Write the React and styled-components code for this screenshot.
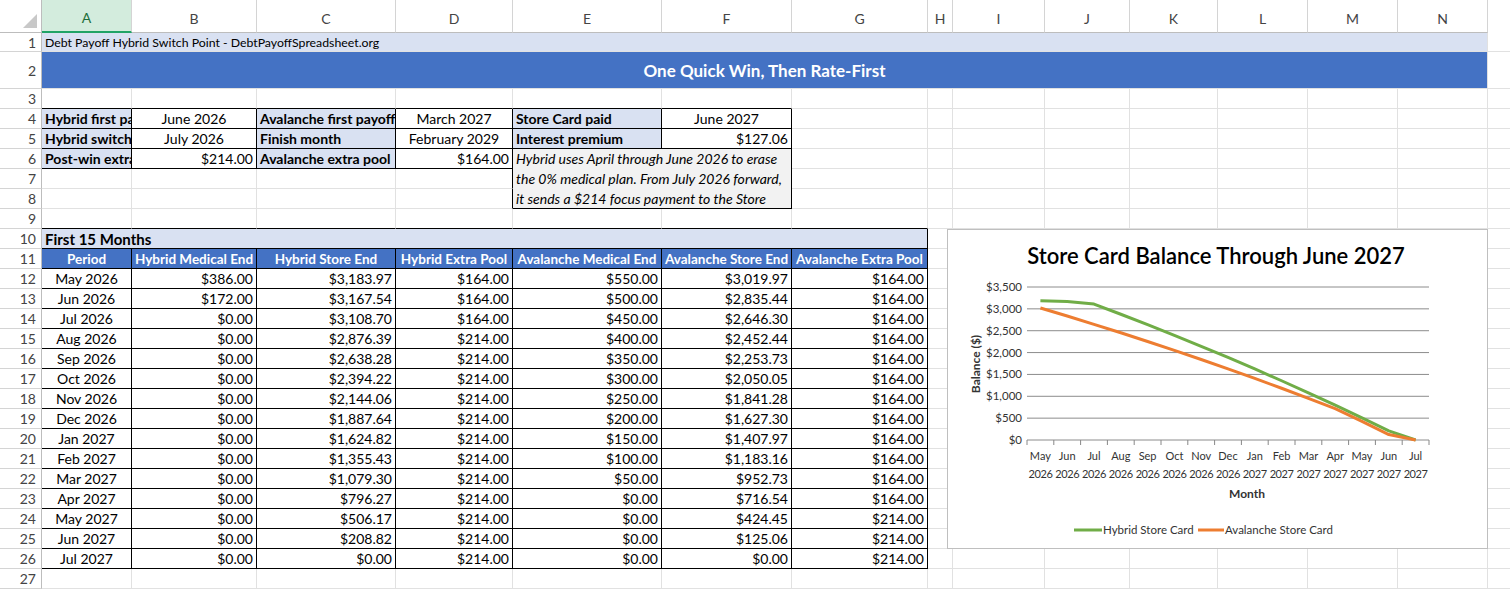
import React from "react";
import styled, { createGlobalStyle, css } from "styled-components";

const Global = createGlobalStyle`
  html, body { margin: 0; padding: 0; background: #fff; overflow: hidden; }
  body { font-family: Lato, "Open Sans", sans-serif; }
`;

const COLS = [42, 90, 125, 139, 117, 149, 130, 136, 25, 92, 85, 88, 90, 90, 90, 40];
const LETTERS = ["", "A", "B", "C", "D", "E", "F", "G", "H", "I", "J", "K", "L", "M", "N", ""];
const ROWH = [33, 19, 37, ...Array(25).fill(20)];

const Sheet = styled.div`
  position: relative;
  display: grid;
  grid-template-columns: ${COLS.map((c) => c + "px").join(" ")};
  grid-template-rows: ${ROWH.map((h) => h + "px").join(" ")};
  width: 1510px;
  font-size: 14px;
  color: #000;
`;

const ColHead = styled.div`
  grid-column: ${(p) => p.$c + 1};
  grid-row: 1;
  display: flex;
  align-items: flex-end;
  justify-content: center;
  padding-bottom: 5px;
  box-sizing: border-box;
  font-size: 14px;
  color: ${(p) => (p.$sel ? "#1e6e3c" : "#444")};
  background: ${(p) => (p.$sel ? "#d3ecdd" : "#fff")};
  border-right: 1px solid #d4d4d4;
  border-bottom: ${(p) => (p.$sel ? "2px solid #21a366" : "1px solid #bdbdbd")};
`;

const Corner = styled.div`
  grid-column: 1;
  grid-row: 1;
  border-right: 1px solid #bdbdbd;
  border-bottom: 1px solid #bdbdbd;
  position: relative;
  &::after {
    content: "";
    position: absolute;
    right: 4px;
    bottom: 4px;
    border-left: 14px solid transparent;
    border-bottom: 14px solid #c8c8c8;
  }
`;

const RowHead = styled.div`
  grid-column: 1;
  grid-row: ${(p) => p.$r + 1};
  display: flex;
  align-items: center;
  justify-content: flex-end;
  padding-right: 5px;
  color: #444;
  font-size: 14px;
  border-right: 1px solid #bdbdbd;
  border-bottom: 1px solid #d4d4d4;
`;

const Cell = styled.div`
  grid-column: ${(p) => p.$c + 1} / span ${(p) => p.$cs || 1};
  grid-row: ${(p) => p.$r + 1} / span ${(p) => p.$rs || 1};
  box-sizing: border-box;
  display: flex;
  align-items: ${(p) => (p.$top ? "flex-start" : "center")};
  justify-content: ${(p) => (p.$align === "right" ? "flex-end" : p.$align === "center" ? "center" : "flex-start")};
  padding: 0 3px;
  white-space: nowrap;
  overflow: hidden;
  background: ${(p) => p.$bg || "#fff"};
  border-right: 1px solid ${(p) => (p.$br ? "#000" : "#e1e1e1")};
  border-bottom: 1px solid ${(p) => (p.$bb ? "#000" : "#e1e1e1")};
  font-weight: ${(p) => (p.$bold ? 700 : 400)};
  font-style: ${(p) => (p.$italic ? "italic" : "normal")};
  color: ${(p) => p.$color || "#000"};
  font-size: ${(p) => p.$fs || 14}px;
  ${(p) => p.$wrap && css`white-space: normal; line-height: 20px;`}
`;

const ChartBox = styled.div`
  position: absolute;
  left: 947px;
  top: 229px;
  width: 541px;
  height: 320px;
  background: #fff;
  border: 1px solid #bfbfbf;
  box-sizing: border-box;
`;

const LB = "#d9e1f2";
const BLUE = "#4472c4";

const months = ["May 2026","Jun 2026","Jul 2026","Aug 2026","Sep 2026","Oct 2026","Nov 2026","Dec 2026","Jan 2027","Feb 2027","Mar 2027","Apr 2027","May 2027","Jun 2027","Jul 2027"];
const hMed = [386, 172, 0,0,0,0,0,0,0,0,0,0,0,0,0];
const hStore = [3183.97,3167.54,3108.70,2876.39,2638.28,2394.22,2144.06,1887.64,1624.82,1355.43,1079.30,796.27,506.17,208.82,0];
const hExtra = [164,164,164,214,214,214,214,214,214,214,214,214,214,214,214];
const aMed = [550,500,450,400,350,300,250,200,150,100,50,0,0,0,0];
const aStore = [3019.97,2835.44,2646.30,2452.44,2253.73,2050.05,1841.28,1627.30,1407.97,1183.16,952.73,716.54,424.45,125.06,0];
const aExtra = [164,164,164,164,164,164,164,164,164,164,164,164,214,214,214];

const fmt = (v) => "$" + v.toLocaleString("en-US", { minimumFractionDigits: 2, maximumFractionDigits: 2 });

const content = {};
const set = (r, c, props) => (content[r + "," + c] = props);
set(1, 1, { cs: 14, text: "Debt Payoff Hybrid Switch Point - DebtPayoffSpreadsheet.org", bg: LB, fs: 12.3 });
set(2, 1, { cs: 14, text: "One Quick Win, Then Rate-First", bg: BLUE, color: "#fff", bold: true, align: "center", fs: 17 });
const kv = [
  [4, "Hybrid first payoff", "June 2026", "center", "Avalanche first payoff", "March 2027", "center", "Store Card paid", "June 2027", "center"],
  [5, "Hybrid switch month", "July 2026", "center", "Finish month", "February 2029", "center", "Interest premium", "$127.06", "right"],
];
kv.forEach(([r, a, b, ba, c, d, da, e, f, fa]) => {
  set(r, 1, { text: a, bg: LB, bold: true });
  set(r, 2, { text: b, align: ba });
  set(r, 3, { text: c, bg: LB, bold: true });
  set(r, 4, { text: d, align: da });
  set(r, 5, { text: e, bg: LB, bold: true });
  set(r, 6, { text: f, align: fa });
});
set(6, 1, { text: "Post-win extra", bg: LB, bold: true });
set(6, 2, { text: "$214.00", align: "right" });
set(6, 3, { text: "Avalanche extra pool", bg: LB, bold: true });
set(6, 4, { text: "$164.00", align: "right" });
set(6, 5, { cs: 2, rs: 3, wrap: true, top: true, italic: true, bg: "#f2f2f2", text: "Hybrid uses April through June 2026 to erase the 0% medical plan. From July 2026 forward, it sends a $214 focus payment to the Store" });
set(10, 1, { cs: 7, text: "First 15 Months", bg: LB, bold: true, fs: 15 });
["Period","Hybrid Medical End","Hybrid Store End","Hybrid Extra Pool","Avalanche Medical End","Avalanche Store End","Avalanche Extra Pool"].forEach((t, i) =>
  set(11, i + 1, { text: t, bg: BLUE, color: "#fff", bold: true, align: "center", fs: 13.5 })
);
months.forEach((m, i) => {
  const r = 12 + i;
  set(r, 1, { text: m, align: "center" });
  [hMed, hStore, hExtra, aMed, aStore, aExtra].forEach((arr, j) => set(r, j + 2, { text: fmt(arr[i]), align: "right" }));
});

const boxed = (r, c) =>
  (r >= 4 && r <= 6 && c >= 1 && c <= 6) ||
  (r >= 7 && r <= 8 && c >= 5 && c <= 6) ||
  (r >= 10 && r <= 26 && c >= 1 && c <= 7);

function Chart() {
  const x0 = 79, x1 = 481, yT = 57, yB = 210;
  const cw = (x1 - x0) / 15;
  const y = (v) => yB - (v / 3500) * (yB - yT);
  const pts = (arr) => arr.map((v, i) => `${x0 + cw * (i + 0.5)},${y(v)}`).join(" ");
  const ticks = [0, 500, 1000, 1500, 2000, 2500, 3000, 3500];
  const font = "Lato, 'Open Sans', sans-serif";
  return (
    <ChartBox>
      <svg width="541" height="320" fontFamily={font}>
        <text x="268" y="34" textAnchor="middle" fontSize="22" fontWeight="600" fill="#000">Store Card Balance Through June 2027</text>
        {ticks.map((t) => (
          <g key={t}>
            <line x1={x0} x2={x1} y1={y(t)} y2={y(t)} stroke="#8c8c8c" strokeWidth="1" />
            <text x="74" y={y(t) + 4} textAnchor="end" fontSize="11.5" fill="#333">${t.toLocaleString("en-US")}</text>
          </g>
        ))}
        {Array.from({ length: 16 }, (_, i) => (
          <line key={i} x1={x0 + cw * i} x2={x0 + cw * i} y1={yB} y2={yB + 5} stroke="#888" />
        ))}
        {months.map((m, i) => {
          const [mo, yr] = m.split(" ");
          const cx = x0 + cw * (i + 0.5);
          return (
            <g key={m} fontSize="11" fill="#333">
              <text x={cx} y="230" textAnchor="middle">{mo}</text>
              <text x={cx} y="248" textAnchor="middle" letterSpacing="-0.4">{yr}</text>
            </g>
          );
        })}
        <text x="299" y="268" textAnchor="middle" fontSize="12" fontWeight="700" fill="#333">Month</text>
        <text transform="translate(32,134) rotate(-90)" textAnchor="middle" fontSize="12" fontWeight="700" fill="#333">Balance ($)</text>
        <polyline points={pts(hStore)} fill="none" stroke="#70ad47" strokeWidth="3" strokeLinejoin="round" />
        <polyline points={pts(aStore)} fill="none" stroke="#ed7d31" strokeWidth="3" strokeLinejoin="round" />
        <line x1="126" x2="154" y1="300" y2="300" stroke="#70ad47" strokeWidth="3" />
        <text x="155" y="304" fontSize="11.5" fill="#333">Hybrid Store Card</text>
        <line x1="250" x2="276" y1="300" y2="300" stroke="#ed7d31" strokeWidth="3" />
        <text x="277" y="304" fontSize="11.5" fill="#333">Avalanche Store Card</text>
      </svg>
    </ChartBox>
  );
}

export default function App() {
  const cells = [];
  const covered = new Set();
  Object.entries(content).forEach(([k, p]) => {
    const [r, c] = k.split(",").map(Number);
    for (let i = 0; i < (p.rs || 1); i++)
      for (let j = 0; j < (p.cs || 1); j++) if (i || j) covered.add(r + i + "," + (c + j));
  });
  for (let r = 1; r <= 27; r++) {
    cells.push(<RowHead key={"rh" + r} $r={r}>{r}</RowHead>);
    for (let c = 1; c <= 15; c++) {
      const k = r + "," + c;
      if (covered.has(k)) continue;
      const p = content[k] || {};
      const cs = p.cs || 1, rs = p.rs || 1;
      const lastC = c + cs - 1, lastR = r + rs - 1;
      const br = boxed(r, lastC) || boxed(r, lastC + 1);
      const bb = boxed(lastR, c) || boxed(lastR + 1, c);
      cells.push(
        <Cell key={k} $r={r} $c={c} $cs={cs} $rs={rs} $bg={p.bg} $bold={p.bold} $italic={p.italic}
          $color={p.color} $align={p.align} $fs={p.fs} $wrap={p.wrap} $top={p.top}
          $br={br} $bb={bb}>
          {p.text}
        </Cell>
      );
    }
  }
  return (
    <>
      <Global />
      <Sheet>
        <Corner />
        {LETTERS.map((l, i) => (i > 0 && i < 15 ? <ColHead key={l} $c={i} $sel={i === 1}>{l}</ColHead> : null))}
        {cells}
        <Chart />
      </Sheet>
    </>
  );
}
